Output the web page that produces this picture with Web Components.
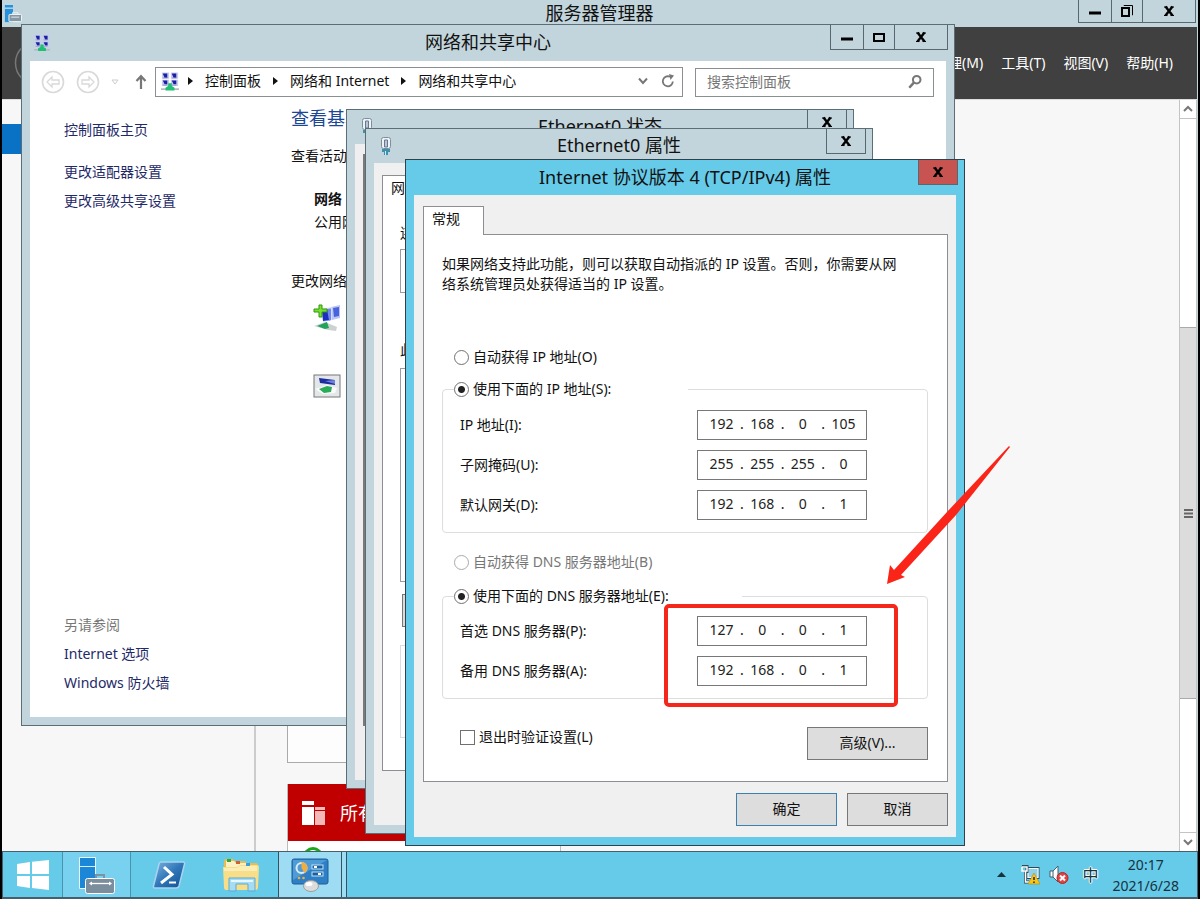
<!DOCTYPE html>
<html lang="zh-CN">
<head>
<meta charset="utf-8">
<title>服务器管理器</title>
<style>
  html, body { margin: 0; height: 100%; background: #000; }
  body { font: 14px/20px "Noto Sans", "Noto Sans CJK SC", sans-serif; color: #111; overflow: hidden; }
</style>
</head>
<body>
<desk-top></desk-top>
<script>
const define = (name, html, setup) => {
  const template = document.createElement('template');
  template.innerHTML = html;
  customElements.define(name, class extends HTMLElement {
    connectedCallback() {
      if (this.shadowRoot) return;
      const content = template.content.cloneNode(true);
      if (setup) setup(this, content);
      this.attachShadow({ mode: 'open' }).append(content);
    }
  });
};

/* ---- icon set ---- */
const network = `<svg viewBox="0 0 20 20"><rect x="1" y="0" width="8" height="7" fill="#c9cbee"/><rect x="11" y="0" width="8" height="7" fill="#c9cbee"/><rect x="1" y="8" width="8" height="7" fill="#c9cbee"/><rect x="11" y="8" width="8" height="7" fill="#c9cbee"/><path d="M2 1h5v5H4zM12 1h5v5h-3zM2 9h5v4H4zM12 9h5v4h-3z" fill="#1a1fa8"/><path d="M2 6h5M12 6h5M2 14h5M12 14h5" stroke="#8e93c9"/><path d="M0 18.500h20" stroke="#b5bcc0" stroke-width="2"/><path d="M8 12h4v3l3 2v3H5v-3l3-2z" fill="#1fbf74"/></svg>`;
const icons = {
  network,
  server: `<svg viewBox="0 0 20 20"><path d="M1 0h9v19H1z" fill="#2a91d8"/><path d="M1 3.500h9" stroke="#fff"/><rect x="5.500" y="10.500" width="14" height="8" rx="1" fill="#8598a5" stroke="#fff"/><path d="M9.500 10V8.500h6V10M8 13.500h9" fill="none" stroke="#e9f2f7"/></svg>`,
  plug: `<svg viewBox="0 0 14 20"><rect x="2.500" y="1.500" width="9" height="11" rx="2" fill="#eef3f6" stroke="#7f8e99"/><path d="M5.500 4v7h3V4z" fill="#b8c6d8" stroke="#68788e"/><path d="M3 13h8v3H9v3H5v-3H3z" fill="#3f8fb0"/><path d="M6.500 15v4" stroke="#c8eefa"/></svg>`,
  back: `<svg viewBox="0 0 24 24" fill="none" stroke="#d9d9d9" stroke-width="1.600"><circle cx="12" cy="12" r="10.500"/><path d="M11 7l-5 5 5 5v-3h7v-4h-7z" stroke-width="1.300"/></svg>`,
  forward: `<svg viewBox="0 0 24 24" fill="none" stroke="#d9d9d9" stroke-width="1.600"><circle cx="12" cy="12" r="10.500"/><path d="M13 7l5 5-5 5v-3H6v-4h7z" stroke-width="1.300"/></svg>`,
  history: `<svg viewBox="0 0 8 6"><path d="M1 1h6L4 5z" fill="#fff" stroke="#ccc"/></svg>`,
  up: `<svg viewBox="0 0 12 16"><path d="M6 15V3M1.500 7L6 2.200 10.500 7" fill="none" stroke="#777" stroke-width="2.200"/></svg>`,
  crumb: `<svg viewBox="0 0 5 8"><path d="M0 0l5 4-5 4z" fill="#111"/></svg>`,
  drop: `<svg viewBox="0 0 10 8"><path d="M1 1.500l4 4.500 4-4.500" fill="none" stroke="#777" stroke-width="2"/></svg>`,
  refresh: `<svg viewBox="0 0 14 14"><path d="M9 2.800A5 5 0 1 0 11.800 7.500" fill="none" stroke="#777" stroke-width="1.800"/><path d="M8 0l5 1.500-3.500 4.500z" fill="#777"/></svg>`,
  search: `<svg viewBox="0 0 14 14"><circle cx="8.500" cy="5" r="3.300" fill="none" stroke="#777" stroke-width="1.800"/><path d="M6 7.500L2 12" stroke="#777" stroke-width="2.200"/></svg>`,
  newconn: `<svg viewBox="0 0 28 28"><path d="M18 3l9-2v13l-8 2z" fill="#b9c6f4"/><path d="M20 4l6-1v9l-5 1z" fill="#4a62dc"/><path d="M8 5l11-2v13l-9 2z" fill="#d4dcf6"/><path d="M9 6l9-1v11l-8 1z" fill="#1d2fc2"/><path d="M14 5l4-.5V16l-2 .4z" fill="#6f87ee"/><path d="M1 22l11-4 12 5-1 4-8-1z" fill="#ccd2d2"/><path d="M4 22l10-4 2 6-4 1z" fill="#22a35a"/><path d="M6 1h3v4h5v3H9v5H6V8H1V5h5z" fill="#7be02d" stroke="#2d9713"/></svg>`,
  trouble: `<svg viewBox="0 0 28 24"><rect x="1" y="1" width="26" height="22" fill="#e4e7ea" stroke="#777"/><path d="M6 4l16 2v5L7 9z" fill="#1c2d9e"/><path d="M12 7l10-1v4z" fill="#6f83dd"/><path d="M2 15l12-4 10 3-2 5-12 1z" fill="#fafafa"/><path d="M6 15l8-3 5 1-1 5-7 1z" fill="#2aab57"/></svg>`,
  circleback: `<svg viewBox="0 0 46 46"><circle cx="23" cy="23" r="21.500" fill="none" stroke="#777" stroke-width="1.500"/></svg>`,
  servers: `<svg viewBox="0 0 24 24"><path d="M0 0h12v4H0zM0 6h12v18H0z" fill="#fff"/><path d="M13 6h10v3H13zM13 10h10v14H13z" fill="#f3b9b9"/></svg>`,
  ok: `<svg viewBox="0 0 20 20"><circle cx="10" cy="10" r="8.500" fill="#fff" stroke="#18a818" stroke-width="3"/></svg>`,
  windows: `<svg viewBox="0 0 32 30"><path d="M0 4l13-2v12H0zM15 1.700L32 0v14H15zM0 16h13v12L0 26zM15 16h17v14l-17-2z" fill="#fff"/></svg>`,
  manager: `<svg viewBox="0 0 38 38"><path d="M1.500 1.500h16v31h-16z" fill="#1c87d6" stroke="#e8f7fd"/><path d="M2 10.500h15" stroke="#cfefff"/><path d="M18 22v-3h8v3" fill="none" stroke="#7d93a3" stroke-width="2"/><rect x="7.500" y="22.500" width="29" height="15" rx="2" fill="#7b8e9d" stroke="#fff"/><path d="M12 27.500h21" stroke="#fff" stroke-width="1.300"/><path d="M14 25.500l-3 2 3 2zM31 25.500l3 2-3 2z" fill="#fff"/></svg>`,
  powershell: `<svg viewBox="0 0 34 28"><defs><linearGradient id="g" x2="1" y2="1"><stop stop-color="#7fb4de"/><stop offset=".5" stop-color="#2f76b9"/><stop offset="1" stop-color="#124f8e"/></linearGradient></defs><path d="M9 1h22q2 0 1.500 2L27 25q-.6 2-3 2H3q-2 0-1.500-2L7 3q.5-2 2-2z" fill="url(#g)" stroke="#a9d3ef" stroke-width="1.500"/><path d="M12 6l8 7.500L9 22" fill="none" stroke="#fff" stroke-width="3"/><path d="M17 21.500h7" stroke="#fff" stroke-width="2"/></svg>`,
  explorer: `<svg viewBox="0 0 38 34"><path d="M2 3q0-2 2-2h7l2 2h10l2 2h9q2 0 2 2v20q0 2-2 2H4q-2 0-2-2z" fill="#e8bd55"/><path d="M4 3h8l2 2h10l2 2h9v6H4z" fill="#fbf1c4"/><path d="M1 9h14l3-2h17q2 0 2 2l-1 20q0 3-2 3H4q-2 0-2-3z" fill="#f8de88"/><path d="M2 10h13l3-2h17v5H2z" fill="#fbeeb4"/><rect x="5" y="1" width="4" height="3" fill="#3aa537"/><rect x="14" y="3" width="4" height="3" fill="#d5602a"/><rect x="24" y="5" width="4" height="3" fill="#3e9ed8"/><path d="M7 20h26v13h-7v-7H14v7H7z" fill="#a5dcf4" stroke="#5fa9cf"/><path d="M9 22h22v2H9z" fill="#e6f8ff"/></svg>`,
  control: `<svg viewBox="0 0 38 34"><rect x="1" y="1" width="36" height="25" rx="2" fill="#2f7fc4" stroke="#1d5f9c"/><path d="M2 2h34L2 22z" fill="#4f9bd6"/><circle cx="10.500" cy="10" r="5" fill="none" stroke="#d8edf9" stroke-width="2"/><path d="M10.500 10V4a6 6 0 0 1 6 6 6 6 0 0 1-3 5z" fill="#f2ad3c"/><rect x="21" y="7" width="11" height="4" fill="#1b5f9f" stroke="#bfe4f7"/><rect x="21" y="14" width="11" height="4" fill="#1b5f9f" stroke="#bfe4f7"/><path d="M23 9h3M27 16h3" stroke="#fff" stroke-width="2"/><circle cx="8" cy="20" r="1.300" fill="#f2ad3c"/><circle cx="12.500" cy="20" r="1.300" fill="#f2ad3c"/><ellipse cx="20" cy="28" rx="7.500" ry="5.500" fill="#dcdcdc" stroke="#9c9c9c"/><ellipse cx="18" cy="26" rx="3.500" ry="2" fill="#fff"/></svg>`,
  more: `<svg viewBox="0 0 9 5"><path d="M0 5l4.500-5L9 5z" fill="#16323d"/></svg>`,
  lan: `<svg viewBox="0 0 20 20"><rect x="7" y="2.500" width="12" height="11" fill="#8dd2ea" stroke="#2c4b57" /><rect x="8" y="3.500" width="10" height="9" fill="none" stroke="#fff"/><path d="M2 1.500h5v5H5.500V17H9" fill="none" stroke="#2c4b57" stroke-width="3"/><path d="M2 2h5v4H5.500V17H9M2 2v4h3" fill="none" stroke="#fff" stroke-width="1.500"/><path d="M14 8l6 11H8z" fill="#f8c51c" stroke="#b58a0c" stroke-width=".6"/><path d="M14 12v3M14 16.500v1.500" stroke="#222" stroke-width="1.500"/></svg>`,
  sound: `<svg viewBox="0 0 20 20"><path d="M1 6h3l5-5v16l-5-5H1z" fill="#fff" stroke="#45616d"/><path d="M4 6v6" stroke="#45616d"/><circle cx="13.500" cy="13" r="5.500" fill="#e04343" stroke="#b62626"/><path d="M11 10.500l5 5m0-5l-5 5" stroke="#fff" stroke-width="2"/></svg>`,
  minimize: `<svg viewBox="0 0 16 16"><path d="M2 10h12" stroke="#000" stroke-width="3"/></svg>`,
  maximize: `<svg viewBox="0 0 16 16"><rect x="3" y="5" width="10" height="7" fill="none" stroke="#000" stroke-width="2"/></svg>`,
  restore: `<svg viewBox="0 0 16 16"><path d="M5 3V2.500h8.500V12H13" fill="none" stroke="#000"/><rect x="3" y="5" width="7" height="8" fill="none" stroke="#000" stroke-width="2"/></svg>`,
  close: `<svg viewBox="0 0 16 16"><path d="M4.500 3.500l7 9m0-9l-7 9" stroke="#000" stroke-width="2.400"/><path d="M3 4h3.500M9.500 4h3.500M3 12.500h3.500M9.500 12.500h3.500" stroke="#000" stroke-width="1"/></svg>`,
  scrollup: `<svg viewBox="0 0 10 8"><path d="M1 6l4-4 4 4" fill="none" stroke="#777" stroke-width="2"/></svg>`,
  scrolldown: `<svg viewBox="0 0 10 8"><path d="M1 2l4 4 4-4" fill="none" stroke="#777" stroke-width="2"/></svg>`,
  grip: `<svg viewBox="0 0 9 9"><path d="M0 1h9M0 4.500h9M0 8h9" stroke="#666" stroke-width="2"/></svg>`
};

define('ui-icon', `<style>
  :host { display: inline-block; flex: none; width: 16px; height: 16px; }
  svg { display: block; width: 100%; height: 100%; }
</style>`, (host, root) => {
  root.append(document.createRange().createContextualFragment(icons[host.getAttribute('name')]));
});

/* ---- caption buttons: "close", or the full set with maximize / restore ---- */
define('window-controls', `<style>
  :host { display: flex; height: 25px; box-sizing: border-box; border: 1px solid #59676e; border-top: 0; }
  button { box-sizing: border-box; margin: 0; padding: 0; border: 0; border-left: 1px solid #59676e; background: var(--close, none); height: 100%;
    display: flex; align-items: center; justify-content: center; }
  .min, .lone { border-left: 0; }
  .min { width: 32px; } .max { width: 31px; } .close { width: 53px; }
  .lone { width: 38px; }
</style>`, (host, root) => {
  const kind = host.getAttribute('kind');
  const add = (cls, icon, label) => {
    const b = document.createElement('button');
    b.className = cls; b.type = 'button'; b.setAttribute('aria-label', label);
    b.innerHTML = `<ui-icon name="${icon}"></ui-icon>`;
    root.append(b);
  };
  if (kind !== 'close') { add('min', 'minimize', '最小化'); add('max', kind, '最大化'); }
  add(kind === 'close' ? 'lone' : 'close', 'close', '关闭');
});

define('app-window', `<style>
  :host { display: flex; flex-direction: column; box-sizing: border-box; border: 1px solid #5c6d75; background: #c3d5dc;
    padding: 0 8px 8px; --client: #fff; isolation: isolate; }
  :host([active]) { border-color: #2d424c; background: #66cae9; }
  :host([active]) window-controls { --close: #c75450; }
  header { display: grid; grid-template-columns: 1fr auto 1fr; align-items: center; height: var(--bar, 34px); flex: none; }
  .icon { margin-left: 4px; height: 20px; }
  h1 { margin: 0; padding-bottom: 2px; font-size: 18px; line-height: 18px; font-weight: 400; white-space: nowrap; }
  window-controls { align-self: start; justify-self: end; margin-right: -2px; }
  main { flex: 1; display: flex; flex-direction: column; background: var(--client); overflow: hidden; }
</style>
<header><span class="icon"><slot name="icon"></slot></span><h1></h1><window-controls></window-controls></header>
<main><slot></slot></main>`, (host, root) => {
  root.querySelector('h1').textContent = host.getAttribute('caption');
  root.querySelector('window-controls').setAttribute('kind', host.getAttribute('controls') || 'close');
});

define('scroll-bar', `<style>
  :host { display: grid; grid-template-rows: 19px 1fr 19px; width: 18px; box-sizing: border-box; background: #fff; border: 1px solid #c4c4c4; border-width: 0 1px; }
  button { margin: 0; padding: 0; border: 0; background: #fff; display: flex; align-items: center; justify-content: center; }
  .first { border-bottom: 1px solid #c4c4c4; } .last { border-top: 1px solid #c4c4c4; }
  ui-icon { width: 10px; height: 8px; }
  .track { display: grid; grid-template-rows: 208fr 371fr 133fr; }
  .thumb { grid-row: 2; background: #dcdcdc; border: 1px solid #aaa; border-width: 1px 0; display: flex; align-items: center; justify-content: center; }
  .thumb ui-icon { width: 9px; height: 9px; }
</style>
<button class="first" type="button" aria-label="向上滚动"><ui-icon name="scrollup"></ui-icon></button>
<div class="track"><div class="thumb"><ui-icon name="grip"></ui-icon></div></div>
<button class="last" type="button" aria-label="向下滚动"><ui-icon name="scrolldown"></ui-icon></button>`);

define('server-manager', `<style>
  :host { display: flex; flex-direction: column; background: #c3d5dc; padding-right: 1px; min-height: 0; }
  .bar { display: grid; grid-template-columns: 1fr auto 1fr; height: 27px; flex: none; align-items: center; }
  .bar ui-icon { width: 18px; height: 20px; margin-left: 2px; }
  h1 { margin: 0; padding-bottom: 2px; font-size: 18px; line-height: 18px; font-weight: 400; }
  window-controls { align-self: start; justify-self: end; margin-right: 1px; height: 23px; }
  .ribbon { flex: none; height: 72px; background: #404040; color: #fff; display: flex; align-items: center; justify-content: space-between; overflow: hidden; }
  .ribbon > ui-icon { width: 46px; height: 46px; margin-left: 12px; }
  .ribbon nav { display: flex; gap: 18px; padding-right: 24px; }
  a { color: inherit; text-decoration: none; }
  .body { flex: 1; display: grid; grid-template-columns: 254px 1fr auto; background: #f7f7f7; min-height: 0; border-top: 1px solid #ddd; }
  .side { border-right: 2px solid #ccc; padding-top: 24px; }
  .sel { height: 30px; background: #0a72c4; }
  .dash { display: flex; flex-direction: column; gap: 21px; padding-left: 31px; overflow: hidden; }
  .card { flex: 1; border: 1px solid #aaa; border-top: 0; background: #fdfdfd; width: 560px; }
  .tile { width: 274px; height: 67px; box-sizing: border-box; border-right: 1px solid #bbb; border-left: 1px solid #bbb; background: #fff; overflow: hidden; }
  .tile h2 { margin: 0; height: 57px; background: #c00000; color: #fff; font-size: 18px; line-height: 24px; font-weight: 400; display: flex; gap: 14px; align-items: center; padding-left: 14px; }
  .tile h2 ui-icon { width: 24px; height: 24px; }
  .tile > ui-icon { width: 20px; height: 20px; margin: 6px 0 0 15px; }
</style>
<div class="bar"><ui-icon name="server"></ui-icon><h1>服务器管理器</h1><window-controls kind="restore"></window-controls></div>
<div class="ribbon"><ui-icon name="circleback"></ui-icon><nav><a href="#manage">管理(M)</a><a href="#tools">工具(T)</a><a href="#view">视图(V)</a><a href="#help">帮助(H)</a></nav></div>
<div class="body">
  <div class="side"><div class="sel"></div></div>
  <div class="dash"><div class="card"></div><div class="tile"><h2><ui-icon name="servers"></ui-icon>所有服务器</h2><ui-icon name="ok"></ui-icon></div></div>
  <scroll-bar></scroll-bar>
</div>`);

define('network-center', `<style>
  :host { display: flex; flex-direction: column; flex: 1; }
  a { text-decoration: none; color: #1f2a68; }
  .tools { display: flex; align-items: center; height: 42px; padding: 0 12px 0 11px; }
  .nav { display: flex; align-items: center; width: 114px; }
  .nav ui-icon { width: 24px; height: 24px; margin-right: 11px; }
  .nav .hist { width: 8px; height: 6px; margin: 0 16px 0 0; }
  .nav .up { width: 12px; height: 16px; margin: 0; }
  .address { flex: 1; box-sizing: border-box; height: 30px; border: 1px solid #8a8f93; display: flex; align-items: center; padding: 0 7px 2px 5px; margin-right: 12px; }
  .address a { color: #111; margin: 0 12px; white-space: nowrap; }
  .address .net { width: 18px; height: 19px; margin-right: 9px; }
  .crumb { width: 5px; height: 8px; }
  .drop { width: 10px; height: 8px; margin: 0 13px 0 auto; }
  .refresh { width: 14px; height: 14px; }
  .search { box-sizing: border-box; width: 239px; height: 29px; border: 1px solid #8a8f93; display: flex; align-items: center; padding: 0 10px 0 11px; }
  input { flex: 1; min-width: 0; border: 0; padding: 0; background: none; font: inherit; color: #111; outline: 0; }
  input::placeholder { color: #777; opacity: 1; }
  .cols { flex: 1; display: grid; grid-template-columns: 261px 1fr; }
  aside { display: flex; flex-direction: column; gap: 9px; padding: 17px 0 24px 34px; align-items: start; }
  aside a:first-child { margin-bottom: 13px; }
  aside .also { margin-top: auto; color: #777; }
  section { padding-top: 5px; white-space: nowrap; }
  h2 { margin: 0 0 18px; font-size: 18px; line-height: 20px; font-weight: 400; color: #1c4795; }
  p { margin: 0; }
  .active { margin: 23px 0 39px 23px; }
  .active b { display: block; margin-bottom: 3px; }
  ul { margin: 13px 0 0 22px; padding: 0; list-style: none; display: grid; gap: 40px; }
  li { height: 28px; }
  li ui-icon { width: 28px; height: 28px; }
</style>
<div class="tools">
  <div class="nav"><ui-icon name="back"></ui-icon><ui-icon name="forward"></ui-icon><ui-icon class="hist" name="history"></ui-icon><ui-icon class="up" name="up"></ui-icon></div>
  <div class="address"><ui-icon class="net" name="network"></ui-icon><ui-icon class="crumb" name="crumb"></ui-icon><a href="#panel">控制面板</a><ui-icon class="crumb" name="crumb"></ui-icon><a href="#internet">网络和 Internet</a><ui-icon class="crumb" name="crumb"></ui-icon><a href="#center">网络和共享中心</a><ui-icon class="drop" name="drop"></ui-icon><ui-icon class="refresh" name="refresh"></ui-icon></div>
  <div class="search"><input type="text" placeholder="搜索控制面板" aria-label="搜索控制面板"><ui-icon name="search"></ui-icon></div>
</div>
<div class="cols">
  <aside><a href="#home">控制面板主页</a><a href="#adapter">更改适配器设置</a><a href="#sharing">更改高级共享设置</a><span class="also">另请参阅</span><a href="#options">Internet 选项</a><a href="#firewall">Windows 防火墙</a></aside>
  <section><h2>查看基本</h2><p>查看活动网络</p><div class="active"><b>网络</b>公用网络</div><p>更改网络设置</p>
  <ul><li><ui-icon name="newconn"></ui-icon></li><li><ui-icon name="trouble"></ui-icon></li></ul></section>
</div>`);

define('ethernet-status', `<style>
  :host { display: flex; flex: 1; padding: 10px 8px 54px; }
  div { flex: 1; border: 2px solid #7a7a7a; background: #fff; }
</style><div></div>`);

define('ethernet-properties', `<style>
  :host { display: flex; flex: 1; flex-direction: column; padding: 12px 8px 54px; }
  .tab { align-self: start; box-sizing: border-box; width: 60px; height: 28px; padding: 2px 8px; border: 1px solid #8c8e94; border-bottom: 0; background: #fff; margin-bottom: -1px; z-index: 1; }
  .page { flex: 1; display: flex; flex-direction: column; border: 1px solid #8c8e94; background: #fff; padding: 20px 17px 32px; }
  .box { border: 1px solid #9a9ca2; }
  .adapter { height: 42px; margin: 6px 0 47px; }
  .list { flex: 1; margin: 8px 0 12px; }
  button { align-self: start; width: 120px; height: 33px; border: 1px solid #777; background: #ddd; margin: 0 0 18px 2px; }
  .about { height: 91px; border-color: #ddd; }
</style>
<div class="tab">网络</div>
<div class="page"><span>连</span><div class="box adapter"></div><span>此</span><div class="box list"></div><button type="button" aria-label="安装"></button><div class="box about"></div></div>`);

define('ip-field', `<style>
  :host { display: flex; justify-content: space-between; align-items: center; height: 30px; }
  .box { display: flex; align-items: center; box-sizing: border-box; width: 170px; height: 30px; border: 1px solid #777; background: #fff; padding: 0 6px 2px 7px; }
  input { width: 33px; box-sizing: border-box; border: 0; padding: 0; margin: 0; background: none; font: inherit; color: #222; text-align: center; outline: 0; }
  .dot { width: 8px; text-align: center; }
</style>
<label for="o0"></label><div class="box"></div>`, (host, root) => {
  const label = host.getAttribute('label');
  root.querySelector('label').textContent = label;
  root.querySelector('.box').innerHTML = host.getAttribute('value').split('.').map((v, i) =>
    `<input id="o${i}" type="text" inputmode="numeric" maxlength="3" value="${v}"${i ? ` aria-label="${label} ${i + 1}"` : ''}>`).join('<span class="dot">.</span>');
});

define('tcpip-properties', `<style>
  :host { display: flex; flex: 1; flex-direction: column; padding: 11px 8px 11px 9px; }
  .tab { align-self: start; box-sizing: border-box; width: 61px; height: 29px; padding: 2px 8px; border: 1px solid #8c8e94; border-bottom: 0; background: #fff; position: relative; margin-bottom: -1px; }
  .page { border: 1px solid #8c8e94; background: #fff; padding: 19px 19px 21px 18px; }
  p { margin: 0; padding-right: 28px; }
  .free { margin: 53px 0 12px 12px; }
  .free.dns { margin: 19px 0 14px 12px; }
  label.opt { display: flex; align-items: center; gap: 4px; height: 20px; }
  .off { color: #777; }
  fieldset { margin: 0; min-width: 0; border: 1px solid #ddd; border-radius: 4px; padding: 11px 60px 12px 17px; }
  .dnsbox { padding-top: 10px; }
  legend { padding: 0; margin-left: -6px; width: 234px; }
  .dnsbox legend { width: 288px; }
  .rows { display: grid; gap: 10px; }
  input { appearance: none; box-sizing: border-box; width: 15px; height: 15px; margin: 0; border: 1px solid #707070; background: #fff; flex: none; }
  input[type=radio] { border-radius: 50%; }
  input[type=radio]:checked { background: radial-gradient(circle, #222 0 3px, #fff 4px); }
  input:disabled { border-color: #aaa; }
  .foot { display: flex; justify-content: space-between; align-items: flex-start; margin: 28px 0 0 18px; }
  button { box-sizing: border-box; margin: 0; padding: 0 0 2px; width: 101px; height: 33px; border: 1px solid #777; background: #ddd; font: inherit; color: #111; }
  .adv { width: 121px; }
  .ok { border-color: #3c7fb1; }
  .actions { display: flex; justify-content: flex-end; gap: 10px; margin-top: 11px; }
</style>
<div class="tab">常规</div>
<div class="page">
  <p>如果网络支持此功能，则可以获取自动指派的 IP 设置。否则，你需要从网络系统管理员处获得适当的 IP 设置。</p>
  <label class="opt free"><input type="radio" name="ip">自动获得 IP 地址(O)</label>
  <fieldset><legend><label class="opt"><input type="radio" name="ip" checked>使用下面的 IP 地址(S):</label></legend>
    <div class="rows"><ip-field label="IP 地址(I):" value="192.168.0.105"></ip-field><ip-field label="子网掩码(U):" value="255.255.255.0"></ip-field><ip-field label="默认网关(D):" value="192.168.0.1"></ip-field></div>
  </fieldset>
  <label class="opt free dns off"><input type="radio" name="dns" disabled>自动获得 DNS 服务器地址(B)</label>
  <fieldset class="dnsbox"><legend><label class="opt"><input type="radio" name="dns" checked>使用下面的 DNS 服务器地址(E):</label></legend>
    <div class="rows"><ip-field label="首选 DNS 服务器(P):" value="127.0.0.1"></ip-field><ip-field label="备用 DNS 服务器(A):" value="192.168.0.1"></ip-field></div>
  </fieldset>
  <div class="foot"><label class="opt"><input type="checkbox">退出时验证设置(L)</label><button class="adv" type="button">高级(V)...</button></div>
</div>
<div class="actions"><button class="ok" type="button">确定</button><button type="button">取消</button></div>`);

define('task-bar', `<style>
  :host { display: flex; box-sizing: border-box; height: 48px; background: #66cae9; border: 1px solid #45606c; border-width: 1px 1px 2px; color: #16323d; align-items: stretch; }
  button { box-sizing: border-box; margin: 0; padding: 0; border: 0; background: none; width: 69px; display: flex; align-items: center; justify-content: center; }
  .start { width: 59px; } .start ui-icon { width: 32px; height: 30px; }
  nav { display: flex; gap: 3px; }
  nav ui-icon { width: 38px; height: 38px; }
  .run { background: #78d1ef; border: 1px solid #4a93ad; border-width: 0 1px; }
  .front { background: #9ddcf2; border: 1px solid #34525f; border-width: 0 1px; }
  nav .front ui-icon { height: 34px; margin: 0 auto; }
  .stack { width: 5px; height: 100%; box-sizing: border-box; border-left: 1px solid #34525f; }
  nav .ps { width: 34px; height: 28px; } nav .ex { height: 34px; }
  .tray { margin-left: auto; display: flex; align-items: center; padding-right: 18px; }
  .tray ui-icon { width: 20px; height: 20px; margin-right: 9px; }
  .tray .more { width: 9px; height: 5px; margin-right: 14px; }
  .ime { margin: 0 14px 0 5px; font-size: 16px; color: #16323d; text-shadow: 1px 0 #fff, -1px 0 #fff, 0 1px #fff, 0 -1px #fff; }
  .clock { text-align: center; line-height: 21px; }
</style>
<button class="start" type="button" aria-label="开始"><ui-icon name="windows"></ui-icon></button>
<nav><button class="run" type="button" aria-label="服务器管理器"><ui-icon name="manager"></ui-icon></button><button type="button" aria-label="PowerShell"><ui-icon class="ps" name="powershell"></ui-icon></button><button type="button" aria-label="文件资源管理器"><ui-icon class="ex" name="explorer"></ui-icon></button><button class="front" type="button" aria-label="控制面板"><ui-icon name="control"></ui-icon><span class="stack"></span></button></nav>
<div class="tray"><ui-icon class="more" name="more"></ui-icon><ui-icon name="lan"></ui-icon><ui-icon name="sound"></ui-icon><span class="ime">中</span><div class="clock">20:17<br>2021/6/28</div></div>`);

/* ---- desktop: windows float on a free canvas, later ones on top ---- */
define('desk-top', `<style>
  :host { display: grid; grid-template-rows: 1fr 48px; height: 100vh; box-sizing: border-box; padding: 0 2px; position: relative; overflow: hidden; }
  app-window, .mark, .arrow { position: absolute; }
  app-window ui-icon { width: 16px; height: 20px; }
  .net { left: 21px; top: 24px; width: 934px; height: 702px; --bar: 36px; }
  .status { left: 346px; top: 109px; width: 508px; height: 680px; --client: #f0eeee; }
  .eth { left: 365px; top: 128px; width: 508px; height: 706px; --client: #f0f0f0; }
  .tcp { left: 405px; top: 159px; width: 560px; --bar: 35px; --client: #f0f0f0; }
  .mark { left: 664px; top: 604px; width: 234px; height: 103px; box-sizing: border-box; border: 4px solid #f5261a; border-radius: 5px; }
  .arrow { left: 886px; top: 445px; width: 125px; height: 140px; }
</style>
<server-manager></server-manager>
<task-bar></task-bar>
<app-window class="net" caption="网络和共享中心" controls="maximize"><ui-icon slot="icon" name="network"></ui-icon><network-center></network-center></app-window>
<app-window class="status" caption="Ethernet0 状态"><ui-icon slot="icon" name="plug"></ui-icon><ethernet-status></ethernet-status></app-window>
<app-window class="eth" caption="Ethernet0 属性"><ui-icon slot="icon" name="plug"></ui-icon><ethernet-properties></ethernet-properties></app-window>
<app-window class="tcp" active caption="Internet 协议版本 4 (TCP/IPv4) 属性"><tcpip-properties></tcpip-properties></app-window>
<div class="mark"></div>
<svg class="arrow" viewBox="0 0 125 140"><path d="M123 1L61 67 8 125l-4-5-3 19 18-7-4-2L70 70 124 2z" fill="#fb2418"/></svg>`);
</script>
</body>
</html>
